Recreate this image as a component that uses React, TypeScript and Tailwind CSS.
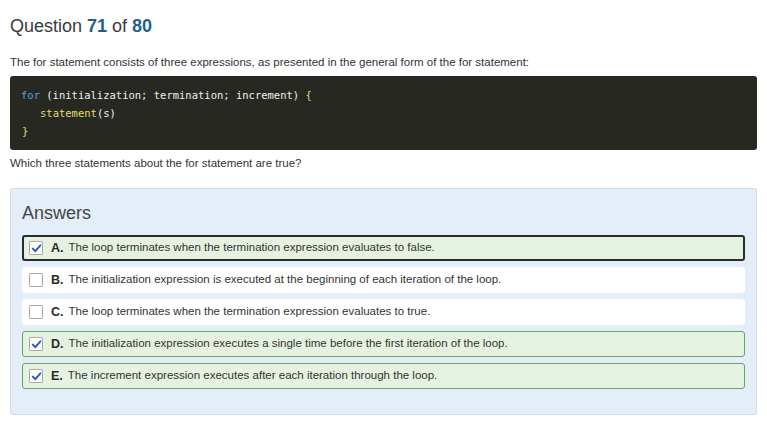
import React from 'react';

type Answer = {
    letter: string;
    text: string;
    checked: boolean;
    state: 'focused' | 'correct' | 'plain';
};

const answers: Answer[] = [
    { letter: 'A.', text: 'The loop terminates when the termination expression evaluates to false.', checked: true, state: 'focused' },
    { letter: 'B.', text: 'The initialization expression is executed at the beginning of each iteration of the loop.', checked: false, state: 'plain' },
    { letter: 'C.', text: 'The loop terminates when the termination expression evaluates to true.', checked: false, state: 'plain' },
    { letter: 'D.', text: 'The initialization expression executes a single time before the first iteration of the loop.', checked: true, state: 'correct' },
    { letter: 'E.', text: 'The increment expression executes after each iteration through the loop.', checked: true, state: 'correct' },
];

const CheckBox = ({ checked }: { checked: boolean }) => (
    <span className="w-[14px] h-[14px] shrink-0 border border-[#a9a9a9] bg-white flex items-center justify-center rounded-[1px]">
        {checked && (
            <svg width="11" height="11" viewBox="0 0 11 11">
                <path d="M1.8 5.6 L4.3 8.2 L9.4 2.4" fill="none" stroke="#2d5fb5" strokeWidth="2" strokeLinecap="round" strokeLinejoin="round" />
            </svg>
        )}
    </span>
);

const rowStyles = {
    focused: 'border-2 border-[#2b2b2b] bg-[#e6f2e1] pl-[5px]',
    correct: 'border border-[#63a863] bg-[#e6f2e1] pl-[6px]',
    plain: 'border border-white bg-white pl-[6px]',
};

const App = () => {
    return (
        <div className="w-[767px] h-[427px] bg-white text-[#333] overflow-hidden" style={{ fontFamily: '"Liberation Sans", Arial, sans-serif' }}>
            <div className="px-[10px] pt-[14px]">
                <h1 className="text-[18px] leading-[24px] text-[#3a3a3a]">
                    Question <span className="text-[#1f5f8f] font-bold">71</span> of <span className="text-[#1f5f8f] font-bold">80</span>
                </h1>

                <p className="mt-[17px] text-[11.5px] leading-[14px]">
                    The for statement consists of three expressions, as presented in the general form of the for statement:
                </p>

                <pre
                    className="mt-[7px] h-[74px] bg-[#272822] rounded-[3px] pl-[11px] pt-[10px] text-[10.5px] leading-[18px] text-[#f0f0ea]"
                    style={{ fontFamily: '"DejaVu Sans Mono", "Liberation Mono", monospace' }}
                >
                    <div><span className="text-[#5aa4dc]">for</span> (initialization; termination; increment) <span className="text-[#e6db74]">{'{'}</span></div>
                    <div className="pl-[19px]"><span className="text-[#e6db74]">statement</span>(s)</div>
                    <div className="pl-[1px] text-[#e6db74]">{'}'}</div>
                </pre>

                <p className="mt-[6px] text-[11.5px] leading-[14px]">
                    Which three statements about the for statement are true?
                </p>

                <div className="mt-[18px] h-[227px] bg-[#e3eef8] border border-[#cfdeea] rounded-[2px] px-[11px] pt-[13px]">
                    <h2 className="text-[18px] leading-[22px] text-[#454545]">Answers</h2>
                    <div className="mt-[11px] flex flex-col gap-[6px]">
                        {answers.map((a) => (
                            <div key={a.letter} className={`h-[26px] flex items-center gap-[8px] rounded-[3px] ${rowStyles[a.state]}`}>
                                <CheckBox checked={a.checked} />
                                <span className="text-[12.5px] font-bold text-[#2a2a2a]">{a.letter}</span>
                                <span className="text-[11.5px] -ml-[3px]">{a.text}</span>
                            </div>
                        ))}
                    </div>
                </div>
            </div>
        </div>
    );
};

export default App;
